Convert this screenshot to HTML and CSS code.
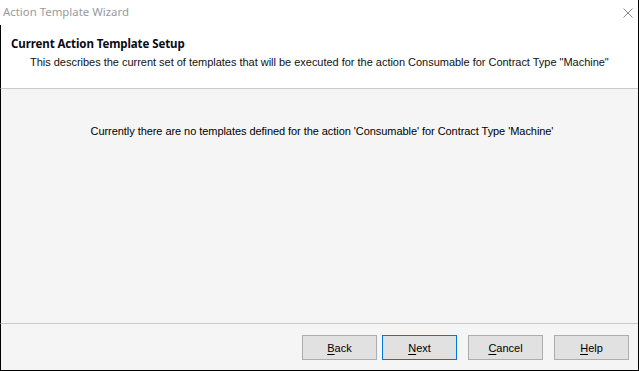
FILE: index.html
```html
<!DOCTYPE html>
<html lang="en">
<head>
  <meta charset="UTF-8">
  <meta name="viewport" content="width=device-width, initial-scale=1.0">
  <link rel="stylesheet" href="styles.css">
  <title>Action Template Wizard</title>
</head>
<body>
  <div class="window">
    <header class="titlebar">
      <span class="titlebar-text">Action Template Wizard</span>
      <svg class="titlebar-close" width="10" height="10" viewBox="0 0 10 10">
        <path d="M0.5 0.5 L9.5 9.5 M9.5 0.5 L0.5 9.5" stroke="#8a8a8a" stroke-width="1" fill="none"/>
      </svg>
    </header>
    <section class="wizard-header">
      <h1>Current Action Template Setup</h1>
      <p>This describes the current set of templates that will be executed for the action Consumable for Contract Type "Machine"</p>
    </section>
    <main class="wizard-body">
      <p>Currently there are no templates defined for the action 'Consumable' for Contract Type 'Machine'</p>
    </main>
    <footer class="wizard-footer">
      <button class="btn"><u>B</u>ack</button>
      <button class="btn btn-default"><u>N</u>ext</button>
      <button class="btn"><u>C</u>ancel</button>
      <button class="btn"><u>H</u>elp</button>
    </footer>
  </div>
</body>
</html>
```

FILE: styles.css
```css
body {
  margin: 0;
  background-color: #fff;
  font-family: 'Liberation Sans', Arial, sans-serif;
  font-size: 11px;
  color: #000;
}

.window {
  display: flex;
  flex-direction: column;
  width: 639px;
  height: 371px;
  box-sizing: border-box;
  border-right: 1px solid #000;
  border-bottom: 1px solid #000;
  background-color: #f5f5f5;
}

.titlebar {
  display: flex;
  align-items: center;
  justify-content: space-between;
  height: 25px;
  padding: 0 5px 2px 3px;
  box-sizing: border-box;
  background-color: #fff;
}

.titlebar-text {
  font-family: 'Noto Sans', 'Open Sans', sans-serif;
  font-size: 11.4px;
  color: #999aa0;
}

.titlebar-close {
  margin-top: 2px;
}

.wizard-header {
  height: 64px;
  padding: 11px 0 0 10px;
  box-sizing: border-box;
  border-left: 1px solid #000;
  border-bottom: 1px solid #c9c9c9;
  background-color: #fff;
}

.wizard-header h1 {
  margin: 0;
  font-family: 'Noto Sans', 'Open Sans', sans-serif;
  font-size: 11.5px;
  font-weight: 700;
  letter-spacing: -0.1px;
  color: #0a0a14;
}

.wizard-header p {
  margin: 5px 0 0 19px;
  letter-spacing: -0.02px;
  color: #111;
}

.wizard-body {
  flex: 1;
  border-left: 1px solid #000;
  border-bottom: 1px solid #c9c9c9;
  padding-top: 36px;
  text-align: center;
}

.wizard-body p {
  margin: 0;
  padding-left: 5px;
  letter-spacing: -0.06px;
}

.wizard-footer {
  display: flex;
  justify-content: flex-end;
  gap: 11px;
  height: 46px;
  padding: 11px 9px 0 0;
  box-sizing: border-box;
  border-left: 1px solid #000;
}

.btn {
  width: 75px;
  height: 25px;
  border: 1px solid #adadad;
  background-color: #e1e1e1;
  font-family: 'Liberation Sans', Arial, sans-serif;
  font-size: 11px;
  color: #000;
  padding: 0;
}

.btn-default {
  margin-left: -6px;
  border-color: #0078d7;
}

.btn u {
  text-underline-offset: 2px;
}
```
